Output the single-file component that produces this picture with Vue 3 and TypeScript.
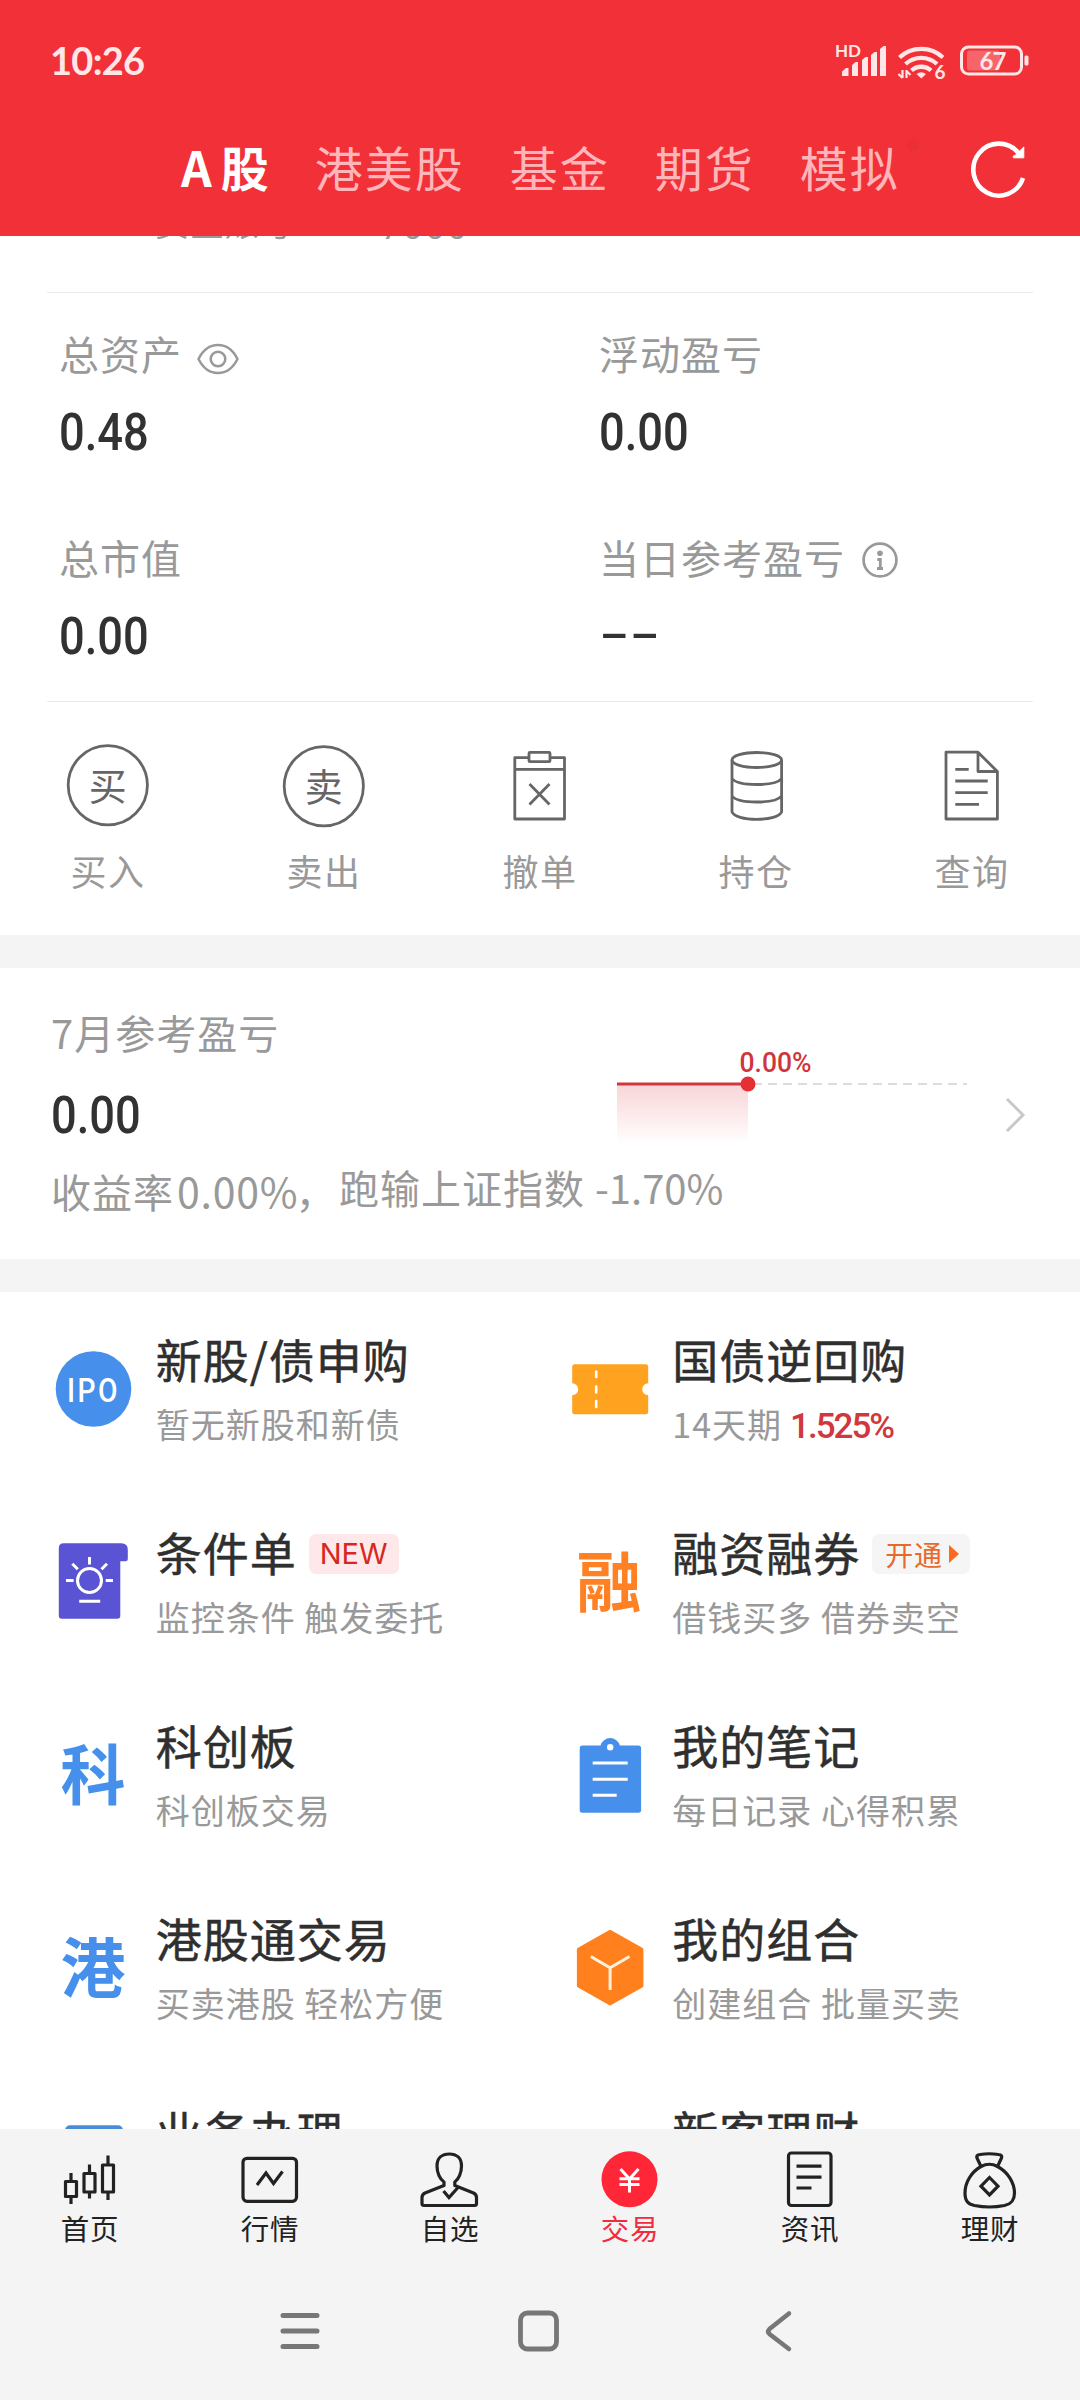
<script setup lang="ts">
interface Asset {
  label: string
  value: string
  icon?: 'eye' | 'info'
}
interface Entry {
  icon: string
  title: string
  sub: string
  rate?: string
  badge?: 'new' | 'open'
}

const markets: string[] = ['A股', '港美股', '基金', '期货', '模拟']

const assets: Asset[] = [
  { label: '总资产', value: '0.48', icon: 'eye' },
  { label: '浮动盈亏', value: '0.00' },
  { label: '总市值', value: '0.00' },
  { label: '当日参考盈亏', value: '--', icon: 'info' },
]

const actions: string[] = ['买入', '卖出', '撤单', '持仓', '查询']

const entries: Entry[] = [
  { icon: 'ipo', title: '新股/债申购', sub: '暂无新股和新债' },
  { icon: 'ticket', title: '国债逆回购', sub: '14天期', rate: '1.525%' },
  { icon: 'condition', title: '条件单', sub: '监控条件 触发委托', badge: 'new' },
  { icon: '融', title: '融资融券', sub: '借钱买多 借券卖空', badge: 'open' },
  { icon: '科', title: '科创板', sub: '科创板交易' },
  { icon: 'note', title: '我的笔记', sub: '每日记录 心得积累' },
  { icon: '港', title: '港股通交易', sub: '买卖港股 轻松方便' },
  { icon: 'cube', title: '我的组合', sub: '创建组合 批量买卖' },
  { icon: 'business', title: '业务办理', sub: '' },
  { icon: 'none', title: '新客理财', sub: '' },
]

const tabs: string[] = ['首页', '行情', '自选', '交易', '资讯', '理财']
</script>

<template>
  <div class="screen">
    <header class="header">
      <div class="status">
        <span class="time">10:26</span>
        <svg class="status-icons" width="196" height="40" viewBox="0 0 196 40" fill="#ffe6e7">
          <text x="0" y="17" class="hd">HD</text>
          <path d="M7 36v-4.500l4-3.500h2.500v8zM17 36V25l3.500-3H23v14zM27 36V20l3.500-3H33v19zM36 36V15l3.500-3H42v24zM45 36V9l3.500-3H51v30z" />
          <g fill="none" stroke="#ffe6e7" stroke-width="4.300">
            <path d="M64.500 17.500a32 32 0 0 1 43.500 0" />
            <path d="M70.500 24a23.500 23.500 0 0 1 31.500 0" />
            <path d="M76.500 30.500a14.500 14.500 0 0 1 19.500 0" />
          </g>
          <path d="M81.500 34a8 8 0 0 1 9.500 0l-4.700 4.500z" />
          <path d="M67.500 30v8M67.500 38l-4-4M71.500 38v-8M71.500 31l4 4" fill="none" stroke="#ffe6e7" stroke-width="2.200" />
          <text x="99.500" y="39" class="six">6</text>
          <rect x="126.500" y="7" width="60" height="27" rx="7" fill="none" stroke="#ffe6e7" stroke-width="3" />
          <rect x="132" y="10.500" width="33" height="20" rx="3" fill="#fff" fill-opacity=".26" />
          <rect x="189.500" y="15.500" width="4" height="10" rx="1.500" />
          <text x="144.500" y="29.800" class="battery">67</text>
        </svg>
      </div>
      <nav class="markets">
        <span v-for="(m, i) in markets" :key="m" class="market" :class="{ on: i === 0 }">{{ m }}</span>
        <svg class="alert" width="12" height="12" viewBox="0 0 12 12"><circle cx="6" cy="6" r="6" fill="#ea2f35" /></svg>
        <svg class="refresh" width="60" height="60" viewBox="0 0 60 60">
          <path d="M54 38A25.500 26 0 1 1 49 12.500" fill="none" stroke="#fff" stroke-width="4.600" />
          <path d="M54.800 7v10.800H44.500c-1-1.300 0-2.300 1.500-2.300z" fill="#fff" stroke="#fff" />
        </svg>
      </nav>
    </header>

    <main class="content">
      <div class="account"><span class="acc-label">资金账号</span><span class="acc-no">****7000</span></div>
      <section class="assets">
        <div v-for="a in assets" :key="a.label" class="asset">
          <div class="asset-label">
            <span>{{ a.label }}</span>
            <svg v-if="a.icon === 'eye'" class="eye" width="42" height="32" viewBox="0 0 42 32" fill="none" stroke="#999" stroke-width="2.500">
              <path d="M1.500 16C6 7 13 2 21 2s15 5 19.500 14C36 25 29 30 21 30S6 25 1.500 16z" />
              <circle cx="21" cy="16" r="7.300" />
            </svg>
            <svg v-if="a.icon === 'info'" class="info" width="36" height="36" viewBox="0 0 36 36">
              <circle cx="18" cy="18" r="16.400" fill="none" stroke="#999" stroke-width="2.700" />
              <circle cx="18" cy="11.200" r="2.800" fill="#999" />
              <path d="M15.300 17.500h3V26M15 26.500h6" fill="none" stroke="#999" stroke-width="2.800" />
            </svg>
          </div>
          <div class="value" :class="{ dash: a.value === '--' }"><span>{{ a.value }}</span></div>
        </div>
      </section>
      <section class="actions">
        <div v-for="(a, i) in actions" :key="a" class="action">
          <svg width="90" height="90" viewBox="0 0 90 90" fill="none" stroke="#666" stroke-width="2.800" stroke-linejoin="round">
            <template v-if="i < 2">
              <circle cx="44.800" :cy="44.3 + i" r="39.600" />
              <text x="44.800" :y="58.6 + i" class="stamp">{{ a[0] }}</text>
            </template>
            <template v-else-if="i === 2">
              <path d="M34 16.700H19.800V78h49.700V16.700H55M19.800 28.300h49.700M34.500 43l20 20.500M54.500 43l-20 20.500" />
              <rect x="34" y="11.300" width="21" height="9.400" rx="1" />
            </template>
            <template v-else-if="i === 3">
              <ellipse cx="45.800" cy="19" rx="24.800" ry="7.500" />
              <path d="M21 19v52c2 4.500 12 7.300 24.800 7.300S68.600 75.500 70.600 71V19M21 37.500c3 4 13 6 24.800 6s21.800-2 24.800-6M21 55c3 4 13 6 24.800 6s21.800-2 24.800-6" />
            </template>
            <template v-else>
              <path d="M51 11.200H19V78h51.400V30.500zM51 11.200v19.300h19.400M28.300 28.300h13.400M28.300 40h32.400M28.300 51.700h32.400M28.300 63.300H52" />
            </template>
          </svg>
          <span>{{ a }}</span>
        </div>
      </section>

      <section class="profit">
        <div class="profit-title">7月参考盈亏</div>
        <div class="value"><span>0.00</span></div>
        <svg class="chart" width="352" height="100" viewBox="0 0 352 100">
          <defs>
            <linearGradient id="fade" x1="0" y1="0" x2="0" y2="1">
              <stop offset="0" stop-color="#f9d5d7" />
              <stop offset="1" stop-color="#fff" />
            </linearGradient>
          </defs>
          <rect x="0" y="40" width="131" height="60" fill="url(#fade)" />
          <path d="M136 40H350" stroke="#dcdcdc" stroke-width="2" stroke-dasharray="9 6" />
          <path d="M0 40h131" stroke="#d0383d" stroke-width="3" />
          <circle cx="131" cy="40" r="7.500" fill="#e52f34" />
          <text x="122.500" y="27.500" textLength="72" lengthAdjust="spacingAndGlyphs" class="chart-label">0.00%</text>
        </svg>
        <svg class="chevron" width="24" height="36" viewBox="0 0 24 36"><path d="M3 2l16 16L3 34" fill="none" stroke="#c8c8c8" stroke-width="3" /></svg>
        <div class="profit-desc"><span class="low">收益率<i>0.00%</i>，</span><span>跑输上证指数 <i>-1.70%</i></span></div>
      </section>

      <section class="entries">
        <div v-for="e in entries" :key="e.title" class="entry">
          <svg width="80" height="80" viewBox="0 0 80 80">
            <template v-if="e.icon === 'ipo'">
              <circle cx="39.500" cy="40" r="37.800" fill="#4690ec" />
              <text x="13" y="52.500" class="ipo" textLength="53" lengthAdjust="spacingAndGlyphs">IPO</text>
            </template>
            <template v-else-if="e.icon === 'ticket'">
              <path d="M4.700 15.300h71a2.500 2.500 0 0 1 2.500 2.500v16.500a6 6 0 0 0 0 12v16.500a2.500 2.500 0 0 1-2.500 2.500h-71a2.500 2.500 0 0 1-2.500-2.500V46.300a6 6 0 0 0 0-12V17.800a2.500 2.500 0 0 1 2.500-2.500z" fill="#ffa21f" />
              <path d="M26.200 22.500v5.500M26.200 37.500v6M26.200 52v6" stroke="#fff" stroke-width="2.600" stroke-linecap="round" />
            </template>
            <template v-else-if="e.icon === 'condition'">
              <path d="M9.800 1.300h57.500q6.500 0 6.500 6.500v9q0 2.500-2.500 2.500h-5v54.500q0 3-3 3H7.800q-3 0-3-3V6.300q0-5 5-5z" fill="#5a54d4" />
              <g fill="none" stroke="#fff" stroke-width="3">
                <circle cx="35.500" cy="38.500" r="12" />
                <path d="M12 38.500h7.600M51.700 38.500h7.300M35.500 15v7.500M18.300 21.700l5.500 5.500M53 21.700l-5.500 5.500M25.200 59.300h21" />
              </g>
            </template>
            <template v-else-if="e.icon === 'note'">
              <path d="M12 10.600h18.500a10 10 0 0 1 19.400 0h18.500a2.700 2.700 0 0 1 2.700 2.700v61.700a2.700 2.700 0 0 1-2.700 2.700H12.400a2.700 2.700 0 0 1-2.700-2.700V13.300a2.700 2.700 0 0 1 2.700-2.700z" fill="#4690ec" />
              <circle cx="40.200" cy="12.300" r="3.200" fill="#fff" />
              <path d="M22.700 28h35M22.700 44.300h35M22.700 60.300h24" stroke="#fff" stroke-width="3" />
            </template>
            <template v-else-if="e.icon === 'cube'">
              <path d="M40.100 3.300L72 21.200V58L40.100 76 8.300 58V21.200z" fill="#ff801c" stroke="#ff801c" stroke-width="2.800" stroke-linejoin="round" />
              <path d="M20.800 28.500L40.100 39.800 59.500 28.500M40.100 39.800V62" fill="none" stroke="#fff0dc" stroke-width="3" />
            </template>
            <rect v-else-if="e.icon === 'business'" x="11" y="4.300" width="58" height="70" rx="5" fill="#4c8bd6" />
            <text v-else-if="e.icon !== 'none'" x="39" y="63.500" class="glyph" :class="{ orange: e.icon === '融' }">{{ e.icon }}</text>
          </svg>
          <div class="entry-text">
            <div class="entry-title">
              <span>{{ e.title }}</span>
              <span v-if="e.badge === 'new'" class="badge new">NEW</span>
              <span v-if="e.badge === 'open'" class="badge open">开通<svg width="10" height="18" viewBox="0 0 10 18"><path d="M0 0l10 9-10 9z" fill="#fb6a1c" /></svg></span>
            </div>
            <div class="entry-sub">{{ e.sub }}<b v-if="e.rate">{{ e.rate }}</b></div>
          </div>
        </div>
      </section>
    </main>

    <footer class="footer">
      <nav class="tabs">
        <div v-for="(t, i) in tabs" :key="t" class="tab" :class="{ on: i === 3 }">
          <svg width="64" height="60" viewBox="0 0 64 60" fill="none" stroke="#222" stroke-width="3.200" stroke-linejoin="round">
            <path v-if="i === 0" d="M7.500 32.500h11v15h-11zM13 24v8.500M13 47.500V55M26 24.500h11v18.500h-11zM31.500 15.500v9M31.500 43v6.500M44.500 16h11v27h-11zM50 6.500V16M50 43v8" />
            <template v-else-if="i === 1">
              <rect x="5" y="9.300" width="53.500" height="43" rx="4" />
              <path d="M19 36l9-12 7.500 10.500 9-12" stroke-linejoin="miter" />
            </template>
            <template v-else-if="i === 2">
              <path d="M26 33c-4-2.500-7-9-7-16 0-8 5-12 12.300-12s12.200 4 12.200 12c0 7-3 13.500-6.700 16v3.500L55.500 44q3 1.500 3 4.500v6q0 2-2 2H6q-2 0-2-2v-6q0-3 3-4.500l19-7.500z" />
              <path d="M25.500 42l5.500 6.500L40 38.500" stroke-linejoin="miter" />
            </template>
            <template v-else-if="i === 3">
              <circle cx="31.500" cy="30.300" r="28" fill="#ff2638" stroke="none" />
              <path d="M22.500 20l9 10 9-10M31.500 29v14.500M21.500 29.800h20M21.500 35.500h20" stroke="#fff" stroke-linejoin="miter" stroke-width="3" />
            </template>
            <template v-else-if="i === 4">
              <rect x="10.500" y="4" width="42.500" height="52.500" rx="3" />
              <path d="M18.500 17.200h25M18.500 28.200h25M18.500 39h15" />
            </template>
            <template v-else>
              <path d="M23 17.500l-4-8.500q-1-3 3-3.500 9-1.500 18.500 0 4 .5 3 3.500l-4 8.500M23 17.500q8.500-4.500 16.500 0C50 23 56.500 34 56.500 44c0 8-3.500 11-10 12.500-10 2-20 2-30 0C10 55 7 52 7 44c0-10 6-21 16-26.500z" />
              <path d="M31.500 28.500l8.500 8.700-8.500 8.700-8.500-8.700z" stroke-linejoin="miter" />
            </template>
          </svg>
          <span>{{ t }}</span>
        </div>
      </nav>
      <div class="system">
        <svg width="60" height="60" viewBox="0 0 60 60"><path d="M13 14.500h34M13 30h34M13 45.500h34" stroke="#777" stroke-width="5" stroke-linecap="round" /></svg>
        <svg width="60" height="60" viewBox="0 0 60 60"><rect x="11.500" y="12" width="36" height="36" rx="7" fill="none" stroke="#777" stroke-width="4.800" /></svg>
        <svg width="60" height="60" viewBox="0 0 60 60"><path d="M41 12.500L21.500 28q-2.500 2.500 0 5L41 48" fill="none" stroke="#777" stroke-width="4.500" stroke-linecap="round" /></svg>
      </div>
    </footer>
  </div>
</template>

<style>
body {
  background: #f4f4f4;
}
</style>

<style scoped>
.screen {
  width: 1080px;
  height: 2400px;
  overflow: hidden;
  display: flex;
  flex-direction: column;
  background: #f4f4f4;
  font-family: "Noto Sans CJK SC", "Noto Sans", sans-serif;
  color: #323232;
  white-space: nowrap;
}
svg {
  display: block;
  flex: none;
}
.header {
  height: 236px;
  flex: none;
  background: #f23037;
}
.status {
  height: 119px;
  display: flex;
  align-items: center;
  justify-content: space-between;
  padding: 0 49px 0 50px;
}
.time {
  font: 700 38px/50px Lato, sans-serif;
  letter-spacing: -0.7px;
  color: #ffe6e7;
}
.status-icons { overflow: visible; }
.hd { font: 700 17px Lato, sans-serif; }
.six { font: 700 19px Lato, sans-serif; }
.battery { font: 700 24px Lato, sans-serif; letter-spacing: -1px; }
.markets {
  height: 94px;
  display: flex;
  align-items: center;
  padding-left: 181px;
  line-height: 94px;
}
.market {
  font-size: 48px;
  letter-spacing: 2px;
  color: #ffb6ba;
  margin-right: 45px;
}
.market.on {
  font-weight: 700;
  color: #fff;
  margin-right: 44px;
}
.market.on::first-letter {
  letter-spacing: 9px;
}
.market:nth-child(5) {
  margin-right: 7px;
}
.alert { margin-bottom: 42px; }
.refresh { margin: 8px 0 0 50px; }
.content {
  height: 1893px;
  flex: none;
  overflow: hidden;
  background: #fff;
}
.account {
  margin: -42px 47px 0;
  padding: 0 0 42px 108px;
  height: 56px;
  line-height: 56px;
  font-size: 34px;
  letter-spacing: 0.9px;
  color: #999;
  border-bottom: 1px solid #ebebeb;
  display: flex;
}
.acc-no {
  font: 34px/56px Roboto, sans-serif;
  letter-spacing: 3px;
  padding-top: 5px;
  margin-left: 16px;
}
.assets {
  display: grid;
  grid-template-columns: 540px 1fr;
  margin: 0 47px;
  border-bottom: 1px solid #ebebeb;
}
.asset {
  height: 204px;
  box-sizing: border-box;
  padding: 35px 0 0 12px;
}
.asset-label {
  height: 50px;
  display: flex;
  align-items: center;
  font-size: 40px;
  line-height: 50px;
  letter-spacing: 1px;
  color: #999;
}
.eye { margin: 11px 0 0 15px; }
.info { margin: 10px 0 0 17px; align-self: flex-start; }
.value {
  height: 60px;
  font: 500 52px/60px Roboto, sans-serif;
}
.asset .value { margin-top: 25px; }
.value span {
  display: inline-block;
  transform: scaleX(0.87);
  transform-origin: 0 50%;
}
.value.dash {
  font: 400 54px/48px "Liberation Sans", sans-serif;
}
.dash span { transform: scaleX(1.7); }
.actions {
  height: 194px;
  padding-top: 39px;
  display: grid;
  grid-template-columns: repeat(5, 216px);
}
.action {
  display: flex;
  flex-direction: column;
  align-items: center;
}
.action span {
  margin-top: 14px;
  font-size: 36px;
  line-height: 50px;
  letter-spacing: 1.500px;
  color: #999;
}
.stamp {
  font-size: 38px;
  fill: #666;
  stroke: none;
  text-anchor: middle;
}
.profit {
  height: 291px;
  box-sizing: border-box;
  padding: 39px 0 0 51px;
  display: grid;
  grid-template-columns: 566px 387px 1fr;
  grid-template-rows: 77px 60px 69px;
  box-shadow: 0 -33px 0 #f4f4f4, 0 33px 0 #f4f4f4;
  margin: 33px 0;
}
.profit-title {
  font-size: 40px;
  line-height: 50px;
  letter-spacing: 1px;
  color: #999;
}
.profit .value { grid-row: 2; grid-column: 1; padding-top: 2px; }
.chart { grid-row: 1 / 3; grid-column: 2; align-self: end; }
.chart-label { font: 500 28px Roboto, sans-serif; fill: #cf363b; }
.chevron { grid-row: 1 / 3; grid-column: 3; align-self: end; margin-bottom: 11px; }
.profit-desc {
  grid-row: 3;
  grid-column: 1 / 4;
  margin-top: 18px;
  height: 50px;
  font-size: 40px;
  line-height: 50px;
  letter-spacing: 1px;
  color: #999;
  display: flex;
}
.low { padding-top: 3px; width: 288px; }
.profit-desc i { font-style: normal; letter-spacing: 0; }
.low i { font-size: 41px; margin: 0 -3px 0 3px; letter-spacing: 0.800px; }
.entries {
  display: grid;
  grid-template-columns: 516.600px 1fr;
  grid-auto-rows: 193px;
  padding-left: 53.700px;
}
.entry {
  display: flex;
}
.entry > svg { margin-top: 56.700px; }
.entry-text {
  padding-top: 36px;
  margin-left: 22px;
}
.entry-title {
  height: 60px;
  display: flex;
  align-items: center;
  font-size: 46px;
  line-height: 60px;
  letter-spacing: 1px;
  color: #2f2f2f;
}
.entry-title > span:first-child {
  -webkit-text-stroke: 0.500px #2f2f2f;
}
.entry-sub {
  height: 44px;
  margin-top: 13.700px;
  font-size: 34px;
  line-height: 44px;
  letter-spacing: 1px;
  color: #999;
}
.entry-sub b {
  margin-left: 8px;
  font: 500 35px/44px Roboto, sans-serif;
  letter-spacing: -2px;
  color: #d0383d;
}
.badge {
  height: 40px;
  box-sizing: border-box;
  border-radius: 7px;
  display: flex;
  align-items: center;
  margin: 5px 0 0 12px;
}
.new {
  width: 90px;
  justify-content: center;
  background: #ffe8ea;
  color: #d5281e;
  font: 400 29px/40px Inter, sans-serif;
  letter-spacing: 0;
}
.open {
  width: 98px;
  padding-left: 13px;
  background: #f5f5f5;
  color: #e8692b;
  font-size: 28px;
  line-height: 38px;
  letter-spacing: 0.800px;
}
.open svg { margin-left: 6px; }
.ipo {
  font: 500 34px Roboto, sans-serif;
  letter-spacing: 3px;
  fill: #fff;
}
.glyph {
  font-size: 65px;
  font-weight: 700;
  fill: #4690ec;
  text-anchor: middle;
}
.orange { fill: #ff8124; }
.footer {
  height: 271px;
  background: #f4f4f4;
}
.tabs {
  display: grid;
  grid-template-columns: repeat(6, 180px);
  padding-top: 20px;
}
.tab {
  display: flex;
  flex-direction: column;
  align-items: center;
  font-size: 28.500px;
  line-height: 38px;
  color: #222;
}
.tab span { letter-spacing: 0.800px; }
.tab.on { color: #f02c3e; }
.system {
  display: flex;
  justify-content: space-between;
  padding: 54px 272px 0 270px;
}
</style>
